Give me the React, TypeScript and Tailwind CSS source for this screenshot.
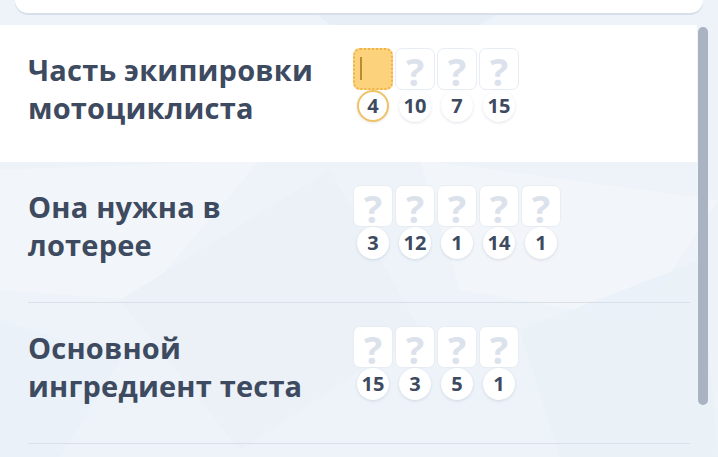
import React from "react";

type Clue = {
  text: string[];
  numbers: number[];
  active?: boolean;
};

const clues: Clue[] = [
  { text: ["Часть экипировки", "мотоциклиста"], numbers: [4, 10, 7, 15], active: true },
  { text: ["Она нужна в", "лотерее"], numbers: [3, 12, 1, 14, 1] },
  { text: ["Основной", "ингредиент теста"], numbers: [15, 3, 5, 1] },
];

function Tile({ n, active }: { n: number; active: boolean }) {
  return (
    <div className="flex w-[40px] flex-col items-center">
      {active ? (
        <div className="relative h-[42px] w-[40px] rounded-[7px] border-2 border-dotted border-[#efb449] bg-[#fdd27c]">
          {/* caret */}
          <div className="absolute left-[5px] top-[7px] h-[23px] w-[2px] bg-[#b98c34]" />
        </div>
      ) : (
        <div className="flex h-[42px] w-[40px] items-center justify-center rounded-[7px] border border-[#e8edf3] bg-white pt-[3px] text-[38px] font-bold leading-[30px] text-[#dbe2eb]">
          ?
        </div>
      )}
      <div
        className={
          active
            ? "flex h-[32px] min-w-[32px] items-center justify-center rounded-full border-2 border-[#f0c266] bg-white px-[5px] text-[20px] font-bold leading-none text-[#3d4a60] shadow-[0_1px_3px_rgba(40,60,90,0.12)]"
            : "flex h-[32px] min-w-[32px] items-center justify-center rounded-full bg-white px-[5px] text-[20px] font-bold leading-none text-[#3d4a60] shadow-[0_1px_3px_rgba(40,60,90,0.14)]"
        }
      >
        {n}
      </div>
    </div>
  );
}

function ClueRow({ clue }: { clue: Clue }) {
  return (
    <div className={clue.active ? "h-[137px] bg-white" : "h-[141px]"}>
      <div className="flex h-full items-start pl-7 pt-[23px]">
        <div className="mt-[3px] w-[325px] text-[29px] font-bold leading-[38px] tracking-[0.2px] text-[#3d4a60]">
          {clue.text.map((line) => (
            <div key={line}>{line}</div>
          ))}
        </div>
        <div className="flex gap-[2px]">
          {clue.numbers.map((n, i) => (
            <Tile key={i} n={n} active={!!clue.active && i === 0} />
          ))}
        </div>
      </div>
      {!clue.active && <div className="-mt-px ml-7 mr-[7px] h-px bg-[#d9e0e8]" />}
    </div>
  );
}

export default function App() {
  return (
    <div className="relative h-[457px] w-[718px] overflow-hidden bg-[#edf3f9] font-['Open_Sans',sans-serif]">
      {/* faint paper shapes in the backdrop */}
      <svg className="absolute inset-0" width="718" height="457" viewBox="0 0 718 457">
        <polygon points="0,170 260,160 140,300 0,290" fill="#f2f6fa" />
        <polygon points="120,300 330,170 420,330 240,450" fill="#e9f0f7" opacity="0.7" />
        <polygon points="420,160 718,200 640,320 460,290" fill="#f2f6fa" />
        <polygon points="520,330 700,260 718,457 560,457" fill="#e8eff6" opacity="0.7" />
        <polygon points="0,320 120,360 60,457 0,457" fill="#e9f0f7" opacity="0.6" />
        <polygon points="300,0 520,0 480,25 330,25" fill="#e7eef6" />
      </svg>

      <div className="relative flex flex-col">
        <div className="mx-[15px] h-[13px] rounded-b-[25px] bg-white shadow-[0_2px_0_#d7e0ea]" />

        <div className="mt-[12px] flex">
          <div className="flex-1">
            {clues.map((clue, i) => (
              <ClueRow key={i} clue={clue} />
            ))}
          </div>
          {/* scrollbar */}
          <div className="w-[21px] pl-px pt-[2px]">
            <div className="h-[378px] w-[10px] rounded-full bg-[#a9b3c1]" />
          </div>
        </div>
      </div>
    </div>
  );
}
